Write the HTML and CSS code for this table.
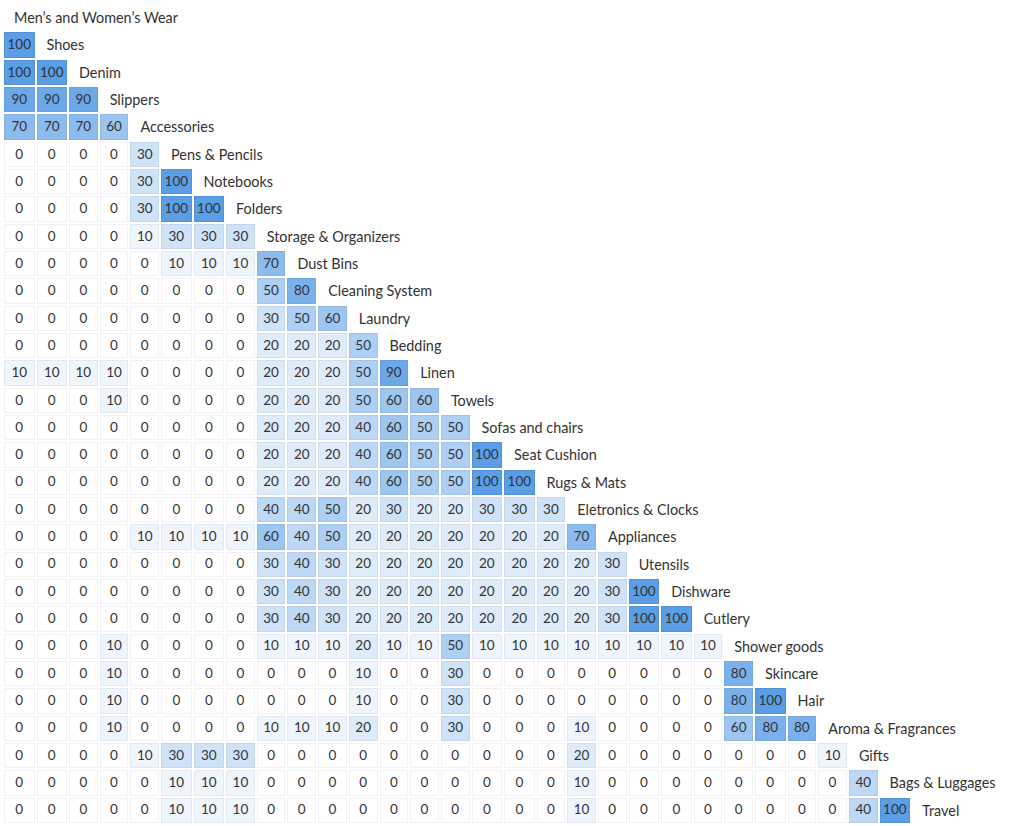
FILE: index.html
```html
<!DOCTYPE html>
<html lang="en">
<head>
<meta charset="utf-8">
<title>Category affinity</title>
<link rel="stylesheet" href="styles.css">
</head>
<body>
<div class="heatmap">
<div class="row"><span class="label">Men’s and Women’s Wear</span></div>
<div class="row"><span class="c v100">100</span><span class="label">Shoes</span></div>
<div class="row"><span class="c v100">100</span><span class="c v100">100</span><span class="label">Denim</span></div>
<div class="row"><span class="c v90">90</span><span class="c v90">90</span><span class="c v90">90</span><span class="label">Slippers</span></div>
<div class="row"><span class="c v70">70</span><span class="c v70">70</span><span class="c v70">70</span><span class="c v60">60</span><span class="label">Accessories</span></div>
<div class="row"><span class="c v0">0</span><span class="c v0">0</span><span class="c v0">0</span><span class="c v0">0</span><span class="c v30">30</span><span class="label">Pens &amp; Pencils</span></div>
<div class="row"><span class="c v0">0</span><span class="c v0">0</span><span class="c v0">0</span><span class="c v0">0</span><span class="c v30">30</span><span class="c v100">100</span><span class="label">Notebooks</span></div>
<div class="row"><span class="c v0">0</span><span class="c v0">0</span><span class="c v0">0</span><span class="c v0">0</span><span class="c v30">30</span><span class="c v100">100</span><span class="c v100">100</span><span class="label">Folders</span></div>
<div class="row"><span class="c v0">0</span><span class="c v0">0</span><span class="c v0">0</span><span class="c v0">0</span><span class="c v10">10</span><span class="c v30">30</span><span class="c v30">30</span><span class="c v30">30</span><span class="label">Storage &amp; Organizers</span></div>
<div class="row"><span class="c v0">0</span><span class="c v0">0</span><span class="c v0">0</span><span class="c v0">0</span><span class="c v0">0</span><span class="c v10">10</span><span class="c v10">10</span><span class="c v10">10</span><span class="c v70">70</span><span class="label">Dust Bins</span></div>
<div class="row"><span class="c v0">0</span><span class="c v0">0</span><span class="c v0">0</span><span class="c v0">0</span><span class="c v0">0</span><span class="c v0">0</span><span class="c v0">0</span><span class="c v0">0</span><span class="c v50">50</span><span class="c v80">80</span><span class="label">Cleaning System</span></div>
<div class="row"><span class="c v0">0</span><span class="c v0">0</span><span class="c v0">0</span><span class="c v0">0</span><span class="c v0">0</span><span class="c v0">0</span><span class="c v0">0</span><span class="c v0">0</span><span class="c v30">30</span><span class="c v50">50</span><span class="c v60">60</span><span class="label">Laundry</span></div>
<div class="row"><span class="c v0">0</span><span class="c v0">0</span><span class="c v0">0</span><span class="c v0">0</span><span class="c v0">0</span><span class="c v0">0</span><span class="c v0">0</span><span class="c v0">0</span><span class="c v20">20</span><span class="c v20">20</span><span class="c v20">20</span><span class="c v50">50</span><span class="label">Bedding</span></div>
<div class="row"><span class="c v10">10</span><span class="c v10">10</span><span class="c v10">10</span><span class="c v10">10</span><span class="c v0">0</span><span class="c v0">0</span><span class="c v0">0</span><span class="c v0">0</span><span class="c v20">20</span><span class="c v20">20</span><span class="c v20">20</span><span class="c v50">50</span><span class="c v90">90</span><span class="label">Linen</span></div>
<div class="row"><span class="c v0">0</span><span class="c v0">0</span><span class="c v0">0</span><span class="c v10">10</span><span class="c v0">0</span><span class="c v0">0</span><span class="c v0">0</span><span class="c v0">0</span><span class="c v20">20</span><span class="c v20">20</span><span class="c v20">20</span><span class="c v50">50</span><span class="c v60">60</span><span class="c v60">60</span><span class="label">Towels</span></div>
<div class="row"><span class="c v0">0</span><span class="c v0">0</span><span class="c v0">0</span><span class="c v0">0</span><span class="c v0">0</span><span class="c v0">0</span><span class="c v0">0</span><span class="c v0">0</span><span class="c v20">20</span><span class="c v20">20</span><span class="c v20">20</span><span class="c v40">40</span><span class="c v60">60</span><span class="c v50">50</span><span class="c v50">50</span><span class="label">Sofas and chairs</span></div>
<div class="row"><span class="c v0">0</span><span class="c v0">0</span><span class="c v0">0</span><span class="c v0">0</span><span class="c v0">0</span><span class="c v0">0</span><span class="c v0">0</span><span class="c v0">0</span><span class="c v20">20</span><span class="c v20">20</span><span class="c v20">20</span><span class="c v40">40</span><span class="c v60">60</span><span class="c v50">50</span><span class="c v50">50</span><span class="c v100">100</span><span class="label">Seat Cushion</span></div>
<div class="row"><span class="c v0">0</span><span class="c v0">0</span><span class="c v0">0</span><span class="c v0">0</span><span class="c v0">0</span><span class="c v0">0</span><span class="c v0">0</span><span class="c v0">0</span><span class="c v20">20</span><span class="c v20">20</span><span class="c v20">20</span><span class="c v40">40</span><span class="c v60">60</span><span class="c v50">50</span><span class="c v50">50</span><span class="c v100">100</span><span class="c v100">100</span><span class="label">Rugs &amp; Mats</span></div>
<div class="row"><span class="c v0">0</span><span class="c v0">0</span><span class="c v0">0</span><span class="c v0">0</span><span class="c v0">0</span><span class="c v0">0</span><span class="c v0">0</span><span class="c v0">0</span><span class="c v40">40</span><span class="c v40">40</span><span class="c v50">50</span><span class="c v20">20</span><span class="c v30">30</span><span class="c v20">20</span><span class="c v20">20</span><span class="c v30">30</span><span class="c v30">30</span><span class="c v30">30</span><span class="label">Eletronics &amp; Clocks</span></div>
<div class="row"><span class="c v0">0</span><span class="c v0">0</span><span class="c v0">0</span><span class="c v0">0</span><span class="c v10">10</span><span class="c v10">10</span><span class="c v10">10</span><span class="c v10">10</span><span class="c v60">60</span><span class="c v40">40</span><span class="c v50">50</span><span class="c v20">20</span><span class="c v20">20</span><span class="c v20">20</span><span class="c v20">20</span><span class="c v20">20</span><span class="c v20">20</span><span class="c v20">20</span><span class="c v70">70</span><span class="label">Appliances</span></div>
<div class="row"><span class="c v0">0</span><span class="c v0">0</span><span class="c v0">0</span><span class="c v0">0</span><span class="c v0">0</span><span class="c v0">0</span><span class="c v0">0</span><span class="c v0">0</span><span class="c v30">30</span><span class="c v40">40</span><span class="c v30">30</span><span class="c v20">20</span><span class="c v20">20</span><span class="c v20">20</span><span class="c v20">20</span><span class="c v20">20</span><span class="c v20">20</span><span class="c v20">20</span><span class="c v20">20</span><span class="c v30">30</span><span class="label">Utensils</span></div>
<div class="row"><span class="c v0">0</span><span class="c v0">0</span><span class="c v0">0</span><span class="c v0">0</span><span class="c v0">0</span><span class="c v0">0</span><span class="c v0">0</span><span class="c v0">0</span><span class="c v30">30</span><span class="c v40">40</span><span class="c v30">30</span><span class="c v20">20</span><span class="c v20">20</span><span class="c v20">20</span><span class="c v20">20</span><span class="c v20">20</span><span class="c v20">20</span><span class="c v20">20</span><span class="c v20">20</span><span class="c v30">30</span><span class="c v100">100</span><span class="label">Dishware</span></div>
<div class="row"><span class="c v0">0</span><span class="c v0">0</span><span class="c v0">0</span><span class="c v0">0</span><span class="c v0">0</span><span class="c v0">0</span><span class="c v0">0</span><span class="c v0">0</span><span class="c v30">30</span><span class="c v40">40</span><span class="c v30">30</span><span class="c v20">20</span><span class="c v20">20</span><span class="c v20">20</span><span class="c v20">20</span><span class="c v20">20</span><span class="c v20">20</span><span class="c v20">20</span><span class="c v20">20</span><span class="c v30">30</span><span class="c v100">100</span><span class="c v100">100</span><span class="label">Cutlery</span></div>
<div class="row"><span class="c v0">0</span><span class="c v0">0</span><span class="c v0">0</span><span class="c v10">10</span><span class="c v0">0</span><span class="c v0">0</span><span class="c v0">0</span><span class="c v0">0</span><span class="c v10">10</span><span class="c v10">10</span><span class="c v10">10</span><span class="c v20">20</span><span class="c v10">10</span><span class="c v10">10</span><span class="c v50">50</span><span class="c v10">10</span><span class="c v10">10</span><span class="c v10">10</span><span class="c v10">10</span><span class="c v10">10</span><span class="c v10">10</span><span class="c v10">10</span><span class="c v10">10</span><span class="label">Shower goods</span></div>
<div class="row"><span class="c v0">0</span><span class="c v0">0</span><span class="c v0">0</span><span class="c v10">10</span><span class="c v0">0</span><span class="c v0">0</span><span class="c v0">0</span><span class="c v0">0</span><span class="c v0">0</span><span class="c v0">0</span><span class="c v0">0</span><span class="c v10">10</span><span class="c v0">0</span><span class="c v0">0</span><span class="c v30">30</span><span class="c v0">0</span><span class="c v0">0</span><span class="c v0">0</span><span class="c v0">0</span><span class="c v0">0</span><span class="c v0">0</span><span class="c v0">0</span><span class="c v0">0</span><span class="c v80">80</span><span class="label">Skincare</span></div>
<div class="row"><span class="c v0">0</span><span class="c v0">0</span><span class="c v0">0</span><span class="c v10">10</span><span class="c v0">0</span><span class="c v0">0</span><span class="c v0">0</span><span class="c v0">0</span><span class="c v0">0</span><span class="c v0">0</span><span class="c v0">0</span><span class="c v10">10</span><span class="c v0">0</span><span class="c v0">0</span><span class="c v30">30</span><span class="c v0">0</span><span class="c v0">0</span><span class="c v0">0</span><span class="c v0">0</span><span class="c v0">0</span><span class="c v0">0</span><span class="c v0">0</span><span class="c v0">0</span><span class="c v80">80</span><span class="c v100">100</span><span class="label">Hair</span></div>
<div class="row"><span class="c v0">0</span><span class="c v0">0</span><span class="c v0">0</span><span class="c v10">10</span><span class="c v0">0</span><span class="c v0">0</span><span class="c v0">0</span><span class="c v0">0</span><span class="c v10">10</span><span class="c v10">10</span><span class="c v10">10</span><span class="c v20">20</span><span class="c v0">0</span><span class="c v0">0</span><span class="c v30">30</span><span class="c v0">0</span><span class="c v0">0</span><span class="c v0">0</span><span class="c v10">10</span><span class="c v0">0</span><span class="c v0">0</span><span class="c v0">0</span><span class="c v0">0</span><span class="c v60">60</span><span class="c v80">80</span><span class="c v80">80</span><span class="label">Aroma &amp; Fragrances</span></div>
<div class="row"><span class="c v0">0</span><span class="c v0">0</span><span class="c v0">0</span><span class="c v0">0</span><span class="c v10">10</span><span class="c v30">30</span><span class="c v30">30</span><span class="c v30">30</span><span class="c v0">0</span><span class="c v0">0</span><span class="c v0">0</span><span class="c v0">0</span><span class="c v0">0</span><span class="c v0">0</span><span class="c v0">0</span><span class="c v0">0</span><span class="c v0">0</span><span class="c v0">0</span><span class="c v20">20</span><span class="c v0">0</span><span class="c v0">0</span><span class="c v0">0</span><span class="c v0">0</span><span class="c v0">0</span><span class="c v0">0</span><span class="c v0">0</span><span class="c v10">10</span><span class="label">Gifts</span></div>
<div class="row"><span class="c v0">0</span><span class="c v0">0</span><span class="c v0">0</span><span class="c v0">0</span><span class="c v0">0</span><span class="c v10">10</span><span class="c v10">10</span><span class="c v10">10</span><span class="c v0">0</span><span class="c v0">0</span><span class="c v0">0</span><span class="c v0">0</span><span class="c v0">0</span><span class="c v0">0</span><span class="c v0">0</span><span class="c v0">0</span><span class="c v0">0</span><span class="c v0">0</span><span class="c v10">10</span><span class="c v0">0</span><span class="c v0">0</span><span class="c v0">0</span><span class="c v0">0</span><span class="c v0">0</span><span class="c v0">0</span><span class="c v0">0</span><span class="c v0">0</span><span class="c v40">40</span><span class="label">Bags &amp; Luggages</span></div>
<div class="row"><span class="c v0">0</span><span class="c v0">0</span><span class="c v0">0</span><span class="c v0">0</span><span class="c v0">0</span><span class="c v10">10</span><span class="c v10">10</span><span class="c v10">10</span><span class="c v0">0</span><span class="c v0">0</span><span class="c v0">0</span><span class="c v0">0</span><span class="c v0">0</span><span class="c v0">0</span><span class="c v0">0</span><span class="c v0">0</span><span class="c v0">0</span><span class="c v0">0</span><span class="c v10">10</span><span class="c v0">0</span><span class="c v0">0</span><span class="c v0">0</span><span class="c v0">0</span><span class="c v0">0</span><span class="c v0">0</span><span class="c v0">0</span><span class="c v0">0</span><span class="c v40">40</span><span class="c v100">100</span><span class="label">Travel</span></div>
</div>
</body>
</html>
```

FILE: styles.css
```css
html, body {
  margin: 0;
  padding: 0;
  background: #ffffff;
}

body {
  font-family: Lato, "Open Sans", "Liberation Sans", sans-serif;
  color: #333333;
}

.heatmap {
  display: flex;
  flex-direction: column;
  gap: 2px;
  padding: 5px 0 0 4px;
}

.row {
  display: flex;
  gap: 2px;
  height: 25.33px;
}

.c {
  flex: none;
  box-sizing: border-box;
  width: 28.7px;
  height: 25.33px;
  display: flex;
  align-items: center;
  justify-content: center;
  font-size: 13.5px;
  line-height: 1;
  color: #333333;
  border: 1px solid rgba(0, 0, 0, 0.05);
}

/* columns holding a 100 value are slightly wider */
.row > .c:nth-child(1),
.row > .c:nth-child(2),
.row > .c:nth-child(6),
.row > .c:nth-child(7),
.row > .c:nth-child(16),
.row > .c:nth-child(17),
.row > .c:nth-child(21),
.row > .c:nth-child(22),
.row > .c:nth-child(25),
.row > .c:nth-child(29) {
  width: 30.5px;
}

.label {
  display: flex;
  align-items: center;
  padding-left: 10px;
  font-size: 14.4px;
  white-space: nowrap;
  color: #333333;
}

.v0   { background: #ffffff; }
.v10  { background: #eff5fd; }
.v20  { background: #deecfa; }
.v30  { background: #cee2f8; }
.v40  { background: #bdd8f5; }
.v50  { background: #adcff3; }
.v60  { background: #9cc5f0; }
.v70  { background: #8cbbee; }
.v80  { background: #7bb1eb; }
.v90  { background: #6ba8e9; }
.v100 { background: #5a9ee6; border-color: rgba(0, 0, 0, 0.08); }
```
